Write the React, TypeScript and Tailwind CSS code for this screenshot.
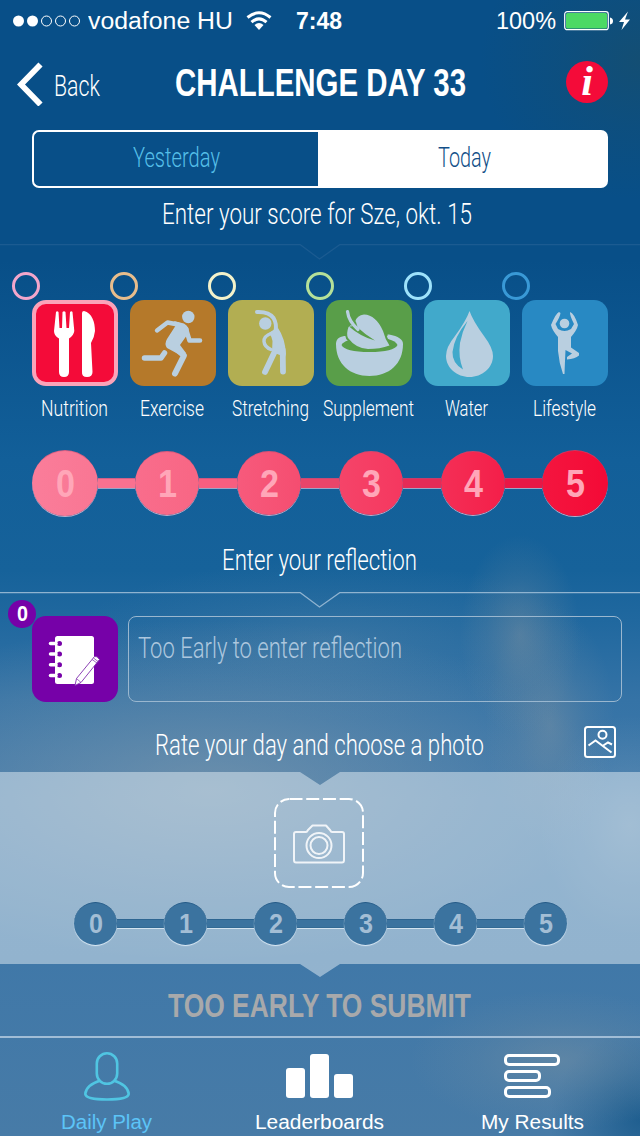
import { useLayoutEffect, useRef, useState } from "react";
import type { ReactNode } from "react";

/* Single line of text condensed horizontally to a given width. */
function Fit({ w, className = "", children }: { w: number; className?: string; children: ReactNode }) {
  const ref = useRef<HTMLSpanElement>(null);
  const [scale, setScale] = useState(1);
  useLayoutEffect(() => {
    if (ref.current) setScale(w / parseFloat(getComputedStyle(ref.current).width));
  }, [w]);
  return (
    <div className={`shrink-0 ${className}`} style={{ width: w }}>
      <span ref={ref} className="inline-block origin-left whitespace-nowrap" style={{ transform: `scaleX(${scale})` }}>
        {children}
      </span>
    </div>
  );
}

const LIGHT = "font-['Roboto','Liberation_Sans',sans-serif] font-light";
const FG = "#b9cfe0";

const tiles = [
  {
    name: "Nutrition", w: 67, ring: "border-[#f3a6cb]", tile: "bg-[#f40b39] border-4 border-[#fba3b9]", box: "4 4 78 78",
    icon: (
      <g fill="#fff">
        <path d="M24 12q1-1.500 2.500 0L27.500 28H30L30.500 12q1.500-1.500 3 0L34.500 28H37L38 12q1.500-1.500 2.500 0L42.300 31Q41.500 36 37 38.500V72Q37 77 32 77T27 72V38.500Q22 36 22 31Z" />
        <path d="M50 13Q50 11 52 11C60 13 63 22 63 31Q62.500 37 59 43L60.500 72Q60.500 77 55 77T50 72Z" />
      </g>
    ),
  },
  {
    name: "Exercise", w: 64, ring: "border-[#e8bd8c]", tile: "bg-[#b5792a]", box: "0 0 86 86",
    icon: (
      <g fill="none" stroke={FG} strokeLinecap="round" strokeLinejoin="round">
        <circle cx="58.300" cy="17" r="6.200" fill={FG} stroke="none" />
        <path d="M27 30.500L37.500 22.500L48 24.500" strokeWidth="4.400" />
        <path d="M56 29L59.500 40.500L70 40.500" strokeWidth="4.600" />
        <path d="M44 21L54 23.500Q60 27 58.500 33L50 45L56 53L50 55L37 48Q34 44 37 39L46 25Z" fill={FG} stroke="none" />
        <path d="M40 43.500L54 55.500L45 73.500" strokeWidth="6" />
        <path d="M14.500 58L31 58L34.500 53" strokeWidth="5.500" />
      </g>
    ),
  },
  {
    name: "Stretching", w: 77, ring: "border-[#f3f2cb]", tile: "bg-[#b2ae52]", box: "0 0 86 86",
    icon: (
      <g fill="none" stroke={FG} strokeLinecap="round" strokeLinejoin="round">
        <circle cx="37.300" cy="23.500" r="6.200" fill={FG} stroke="none" />
        <path d="M29 12Q41 11.500 45.500 18Q49 24 47.500 31" strokeWidth="4" />
        <path d="M50 28Q57 38 58 54L57 57L44 52L44.500 41Q44 37 41 33Q44 30 50 28Z" fill={FG} stroke="none" />
        <path d="M44 33Q35.500 36 36 41.500Q36.500 47 43 49.500" strokeWidth="3.400" />
        <path d="M47.500 50L37 72M54.700 50L55 71.500" strokeWidth="5.800" />
      </g>
    ),
  },
  {
    name: "Supplement", w: 91, ring: "border-[#b5e199]", tile: "bg-[#599e49]", box: "0 0 86 86",
    icon: (
      <g fill={FG}>
        <path d="M10 44C10 38 15 36 20 36L62 36Q60 34 63 34.500Q77 37 77 44C77 64 63 76 43.500 76S10 64 10 44Z" />
        <path d="M15.500 45Q17 42 22 40.500L62 39Q70 41 71.500 45Q68 52 43.500 52T15.500 45Z" fill="#599e49" />
        <path d="M22.500 27Q20 34 22 38Q30 48.500 42 49Q54 49 63.500 45.500Q59 39 57 31Q50 15 38 14.500Q31 15 29 22Z" stroke="#599e49" strokeWidth="4" paintOrder="stroke" />
        <path d="M20.500 10Q22 24 29.500 30Q33 30 30 22Z" fill="#599e49" />
        <path d="M23 26.500Q35 37 49 40.500Q39 34.500 30 26" fill="#599e49" />
        <path d="M21.500 11.500Q22.500 21 32 29.500" fill="none" stroke={FG} strokeWidth="3.200" strokeLinecap="round" />
      </g>
    ),
  },
  {
    name: "Water", w: 43, ring: "border-[#9ee2fb]", tile: "bg-[#41a9cb]", box: "0 0 86 86",
    icon: (
      <>
        <path d="M45.500 11Q49 21 60 36Q69 48 69 56C69 68 58 77 45.500 77S22 68 22 56Q22 47 31 36Q42 21 45.500 11Z" fill={FG} />
        <path d="M43.500 21Q30 37 28.500 52Q28 63 39 69.500Q34 57 36 43Q38 32 43.500 21Z" fill="#41a9cb" />
      </>
    ),
  },
  {
    name: "Lifestyle", w: 63, ring: "border-[#3999d6]", tile: "bg-[#2889c3]", box: "0 0 86 86",
    icon: (
      <g fill={FG}>
        <circle cx="42.500" cy="23.500" r="4.800" />
        <path d="M37 12Q34 13 29 25Q30 30 36 37V51Q37 63 41 74H42.500Q43 60 43.500 50L50 53.500L45 57V59.500Q53 59 57 55.500V53L49 47.500V37Q55 30 56 25Q52 13 48 12Q47.500 15 52 24L49 29Q42.500 33 36 29L33.500 24Q38 17 38.500 13Z" />
      </g>
    ),
  },
];

const scores = [
  { cell: "w-[103px]", bg: "bg-linear-to-r from-[#fa7d9a] to-[#f97693]", bar: "bg-[#f97190]" },
  { cell: "w-[102px]", bg: "bg-linear-to-r from-[#f96d8c] to-[#f86684]", bar: "bg-[#f75e80]" },
  { cell: "w-[102px]", bg: "bg-linear-to-r from-[#f75a7c] to-[#f54d70]", bar: "bg-[#e9456a]" },
  { cell: "w-[102px]", bg: "bg-linear-to-r from-[#f54469] to-[#f5375f]", bar: "bg-[#e52b57]" },
  { cell: "w-[101px]", bg: "bg-linear-to-r from-[#f42e56] to-[#f41e49]", bar: "bg-[#e81746]" },
  { cell: "", bg: "bg-linear-to-r from-[#f4153f] to-[#f40936]", bar: "" },
];

function ScoreTrack() {
  return (
    <div className="mx-8 flex h-[66px] items-center">
      {scores.map((s, i) => (
        <div key={i} className={`flex items-center ${s.cell}`}>
          <div className={`flex shrink-0 items-center justify-center rounded-full border-t border-[#c34f74]/60 shadow-[0_1px_0_#bfaecb] ${s.bg} ${i === 0 || i === 5 ? "size-[66px]" : "size-16"}`}>
            <Fit w={19} className="text-[38px] leading-[62px] font-bold text-[#ffa6b8]">{i}</Fit>
          </div>
          {i < 5 && <div className={`h-[10px] flex-1 border-t border-[#a85080]/50 shadow-[0_1px_0_#9aa5c8] ${s.bar}`} />}
        </div>
      ))}
    </div>
  );
}

function DayTrack() {
  return (
    <div className="ml-[74px] flex h-11 w-[494px] items-center">
      {[0, 1, 2, 3, 4, 5].map((n) => (
        <div key={n} className={n < 5 ? "flex w-[90px] shrink-0 items-center" : "flex items-center"}>
          <div className="flex size-[43px] shrink-0 items-center justify-center rounded-full border-t border-[#255b88] bg-[#3b739f] shadow-[0_1px_1px_#ddebf6]">
            <Fit w={14} className="text-[28px] leading-[42px] font-bold text-[#a3bed5]">{n}</Fit>
          </div>
          {n < 5 && <div className="h-[9px] flex-1 border-y border-t-[#2d6591] border-b-[#326a94] bg-[#3b739f] shadow-[0_1px_0_#d2e3f0]" />}
        </div>
      ))}
    </div>
  );
}

function Divider({ className }: { className: string }) {
  return (
    <svg width="640" height="16" className={`block shrink-0 ${className}`} fill="none" stroke="currentColor">
      <path d="M0 .5H300L319.500 15L340 .5H640" strokeWidth="1.300" />
    </svg>
  );
}

export default function App() {
  return (
    <div className="flex h-[1136px] w-[640px] flex-col overflow-hidden bg-[radial-gradient(ellipse_60px_100px_at_520px_635px,#8092a077,#8092a02c_55%,transparent),radial-gradient(ellipse_65px_120px_at_550px_725px,#8a98a266,#8a98a222_55%,transparent),radial-gradient(ellipse_90px_110px_at_630px_825px,#b6c4ca44,#b6c4ca1c_55%,transparent),radial-gradient(ellipse_160px_140px_at_640px_60px,#204d5c77,#204d5c33_50%,transparent),radial-gradient(ellipse_400px_170px_at_210px_790px,#93a3ae88,#93a3ae44_50%,transparent),radial-gradient(ellipse_260px_80px_at_330px_640px,#6089a855,#6089a822_50%,transparent),radial-gradient(ellipse_150px_70px_at_560px_1060px,#7a92a377,#7a92a32c_55%,transparent),radial-gradient(ellipse_90px_90px_at_640px_1120px,#16588acc,#16588a55_55%,transparent),linear-gradient(180deg,#084f88_0px,#084f88_260px,#125f99_460px,#16629a_570px,#20689f_620px,#3573a6_700px,#417aab_800px,#4078a8_960px,#477ba7_1136px)] font-['Liberation_Sans',Arial,sans-serif] text-white">
      <div className="flex h-10 shrink-0 items-center pt-[2px] pl-[12px]">
        <svg width="68" height="12" fill="none" stroke="#fff">
          <circle cx="6.500" cy="6" r="5.500" fill="#fff" stroke="none" />
          <circle cx="20.500" cy="6" r="5.500" fill="#fff" stroke="none" />
          <circle cx="34.500" cy="6" r="5" />
          <circle cx="48.500" cy="6" r="5" />
          <circle cx="62.500" cy="6" r="5" />
        </svg>
        <Fit w={145} className="ml-[8px] text-[23.500px] leading-[38px]">vodafone HU</Fit>
        <svg width="26" height="20" viewBox="0 0 26 20" className="ml-[13px]" fill="none" stroke="#fff" strokeWidth="3">
          <path d="M1.500 6.500Q13-3 24.500 6.500M5.500 11.200Q13 4.500 20.500 11.200" />
          <path d="M8.500 14Q13 10 17.500 14L13 19Z" fill="#fff" stroke="none" />
        </svg>
        <Fit w={46} className="ml-[24px] text-[23px] leading-[38px] font-bold">7:48</Fit>
        <Fit w={60} className="ml-[154px] text-[23px] leading-[38px]">100%</Fit>
        <svg width="68" height="20" viewBox="0 0 68 20" className="ml-[8px]">
          <rect x=".7" y=".7" width="43.600" height="18" rx="2.500" fill="none" stroke="#fff" strokeWidth="1.200" />
          <rect x="2" y="2" width="41" height="15.500" rx="1.500" fill="#4cd964" />
          <path d="M46 6.500Q49 7 49 10T46 13.500Z" fill="#fff" />
          <path d="M64 .5L55 11H60L57.500 19L66 8.500H61Z" fill="#fff" />
        </svg>
      </div>

      <div className="flex h-[90px] shrink-0 pt-[21px] pl-[17px]">
        <svg width="26" height="44" className="mt-px" fill="none" stroke="#fff" strokeWidth="5.800">
          <path d="M23.500 2.500L4 22.500L23.500 42.500" />
        </svg>
        <Fit w={46} className={`mt-[8px] ml-[11px] text-[29px] leading-[34px] ${LIGHT}`}>Back</Fit>
        <Fit w={291} className="mt-[3px] ml-[75px] text-[38px] leading-[38px] font-bold">CHALLENGE DAY 33</Fit>
        <div className="ml-[100px] flex size-[42px] items-center justify-center rounded-full bg-[#f40b39] font-['Liberation_Serif',serif] text-[42px] leading-[38px] font-bold italic">
          <span className="mt-[-3px]">i</span>
        </div>
      </div>

      <div className={`mx-8 flex h-[58px] shrink-0 text-[27px] leading-[52px] ${LIGHT}`}>
        <div className="flex w-[286px] justify-center rounded-l-[7px] border-2 border-r-0 border-white text-[#55bfe8]">
          <Fit w={87}>Yesterday</Fit>
        </div>
        <div className="flex flex-1 justify-center rounded-r-[7px] bg-white pt-[2px] pl-[3px] text-[#124f88]">
          <Fit w={53}>Today</Fit>
        </div>
      </div>
      <Fit w={310} className={`ml-[162px] h-[56px] pt-[6px] text-[29px] leading-[40px] ${LIGHT}`}>Enter your score for Sze, okt. 15</Fit>
      <Divider className="text-[#1b5b91]" />

      <div className="mt-[12px] flex h-[150px] shrink-0 pl-[12px]">
        {tiles.map((t) => (
          <div key={t.name} className="flex w-[98px] shrink-0 flex-col">
            <div className={`size-7 shrink-0 rounded-full border-[3px] ${t.ring}`} />
            <div className={`ml-[20px] size-[86px] shrink-0 overflow-hidden rounded-[14px] ${t.tile}`}>
              <svg className="block size-full" viewBox={t.box}>{t.icon}</svg>
            </div>
            <div className="ml-[19px] flex w-[86px] shrink-0 justify-center">
              <Fit w={t.w} className={`mt-[9px] text-[22.500px] leading-[27px] ${LIGHT}`}>{t.name}</Fit>
            </div>
          </div>
        ))}
      </div>

      <div className="mt-[28px] mb-px shrink-0"><ScoreTrack /></div>
      <Fit w={195} className={`mt-[23px] ml-[222px] h-[52px] text-[29px] leading-[40px] ${LIGHT}`}>Enter your reflection</Fit>
      <Divider className="text-[#8fb3d0]" />

      <div className="flex h-[110px] shrink-0 items-start">
        <div className="w-[128px] shrink-0 pt-[8px] pl-[32px]">
          <div className="relative size-[86px] rounded-[14px] bg-[#7601a8]">
            <div className="absolute top-[-16px] left-[-24px] flex size-7 items-center justify-center rounded-full bg-[#7601a8] text-[22px] leading-7 font-bold">
              <Fit w={11}>0</Fit>
            </div>
            <svg className="size-full" viewBox="0 0 86 86">
              <rect x="23" y="20" width="39" height="48" rx="2.500" fill="#fff" />
              {[27.5, 38, 48.7, 59.5].map((y) => (
                <g key={y}>
                  <circle cx="27" cy={y} r="4" fill="#fff" />
                  <circle cx="27.500" cy={y} r="2.500" fill="#7601a8" />
                  <path d={`M18.500 ${y}H24`} stroke="#fff" strokeWidth="3.500" strokeLinecap="round" />
                </g>
              ))}
              <path d="M43 69.500L44.500 62.500L62.500 40.500Q65 39.500 67.500 43.500L49 66.500Z" fill="#fff" stroke="#7f2cae" strokeWidth=".9" />
              <path d="M44.500 62.500L49 66.500M60 43.500L65 47M61.500 42L66 45.500" stroke="#7f2cae" strokeWidth=".7" />
            </svg>
          </div>
        </div>
        <div className="mt-[8px] h-[86px] w-[494px] rounded-[8px] border border-[#9ab7cf] pt-[11px] pl-[9px] text-[#adc7de]">
          <Fit w={264} className={`text-[29px] leading-[40px] ${LIGHT}`}>Too Early to enter reflection</Fit>
        </div>
      </div>

      <div className="flex h-[54px] shrink-0">
        <Fit w={329} className={`mt-[7px] ml-[155px] text-[29px] leading-[40px] ${LIGHT}`}>Rate your day and choose a photo</Fit>
        <svg width="32" height="32" className="mt-[8px] ml-[100px]" fill="none" stroke="#fff" strokeWidth="2">
          <rect x="1" y="1" width="30" height="30" rx="2.500" />
          <circle cx="18.500" cy="8.700" r="4" />
          <path d="M4.500 19.500L11.500 14.500L27.500 26.500M18.500 20L24 16.500L28 18.500" />
        </svg>
      </div>

      <div className="mb-[-13px] flex h-[205px] shrink-0 flex-col bg-[#dfe9f2]/52 pt-[26px] [clip-path:polygon(0_0,300px_0,320px_13px,340px_0,100%_0,100%_192px,340px_192px,320px_205px,300px_192px,0_192px)]">
        <svg width="90" height="90" className="ml-[274px] shrink-0" fill="none" stroke="#fff">
          <rect x="1" y="1" width="88" height="88" rx="14" strokeWidth="2" strokeDasharray="13 3.730" strokeDashoffset="-0.500" />
          <g strokeWidth="2" strokeLinejoin="round" opacity=".85">
            <path d="M22 34H32Q33 34 34 32L38.500 27.500H52L56 32Q57 34 58 34H68Q70 34 70 36V62Q70 64.500 68 64.500H22Q20 64.500 20 62V36Q20 34 22 34Z" />
            <circle cx="45" cy="47.500" r="12.500" />
            <circle cx="45" cy="47.500" r="8.500" />
          </g>
        </svg>
        <div className="mt-[13px]"><DayTrack /></div>
      </div>

      <Fit w={303} className="mt-[21px] ml-[168px] h-[51px] text-[34px] leading-[41px] font-bold text-[#a8a9ab]">TOO EARLY TO SUBMIT</Fit>

      <div className="flex h-[100px] shrink-0 border-t-2 border-[#a1bdd6] text-[20px] leading-[26px]">
        <div className="flex w-[213px] flex-col items-center text-[#5cc4f7]">
          <svg width="46" height="49" className="mt-[14px]" fill="none" stroke="#50c5e2" strokeWidth="2.600">
            <rect x="12.800" y="1.300" width="20.400" height="30.500" rx="10.200" />
            <path d="M16.500 28.500Q2 33 1.300 42Q2 47.500 23 47.500T44.700 42Q44 33 29.500 28.500" />
          </svg>
          <Fit w={91} className="mt-[8px]">Daily Play</Fit>
        </div>
        <div className="flex w-[213px] flex-col items-center">
          <div className="mt-[16px] flex h-[44px] items-end gap-[5px]">
            <div className="h-[30px] w-[19px] rounded-[3px] bg-white" />
            <div className="h-[44px] w-[19px] rounded-[3px] bg-white" />
            <div className="h-[24px] w-[19px] rounded-[3px] bg-white" />
          </div>
          <Fit w={129} className="mt-[11px]">Leaderboards</Fit>
        </div>
        <div className="flex w-[212px] flex-col items-center">
          <div className="mt-[16px] flex h-[44px] w-[56px] flex-col justify-between">
            <div className="h-[12px] w-[56px] rounded-[5px] border-[3px] border-white" />
            <div className="h-[12px] w-[37px] rounded-[5px] border-[3px] border-white" />
            <div className="h-[12px] w-[47px] rounded-[5px] border-[3px] border-white" />
          </div>
          <Fit w={103} className="mt-[11px]">My Results</Fit>
        </div>
      </div>
    </div>
  );
}
